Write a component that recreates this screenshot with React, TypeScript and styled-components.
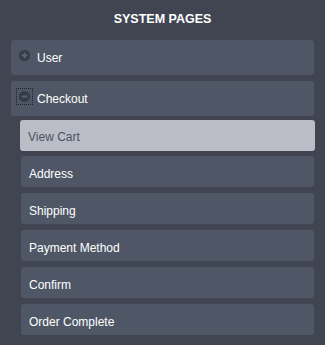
import React from "react";
import styled, { createGlobalStyle } from "styled-components";

const Global = createGlobalStyle`
  html, body {
    margin: 0;
    padding: 0;
    background: #404551;
  }
  body {
    font-family: "Liberation Sans", Arial, sans-serif;
  }
`;

const Panel = styled.nav`
  width: 325px;
  height: 345px;
  box-sizing: border-box;
  padding: 0 11px;
  background: #404551;
`;

const Title = styled.h2`
  margin: 0 0 13px;
  padding-top: 12px;
  font-size: 12.5px;
  line-height: 15px;
  font-weight: bold;
  text-align: center;
  color: #ffffff;
  text-transform: uppercase;
`;

const GroupList = styled.ul`
  list-style: none;
  margin: 0;
  padding: 0;
  display: flex;
  flex-direction: column;
  gap: 6px;
`;

const Group = styled.li`
  display: flex;
  flex-direction: column;
`;

const GroupRow = styled.div`
  height: 35px;
  box-sizing: border-box;
  padding: 11px 8px 0;
  display: flex;
  align-items: flex-start;
  gap: 7px;
  background: #4f5766;
  border-radius: 3px;
  color: #ffffff;
  font-size: 12px;
  line-height: 14px;
`;

const Toggle = styled.span<{ $focused?: boolean }>`
  display: block;
  width: 11px;
  height: 11px;
  margin-top: -1px;
  flex: none;
  outline: ${(p) => (p.$focused ? "1px dotted #1f2228" : "none")};
  outline-offset: 2px;
  svg {
    display: block;
  }
`;

const SubList = styled.ul`
  list-style: none;
  margin: 3px 0 0 10px;
  padding: 0;
  display: flex;
  flex-direction: column;
  gap: 6px;
`;

const SubItem = styled.li<{ $active?: boolean }>`
  height: 31px;
  box-sizing: border-box;
  padding: ${(p) => (p.$active ? "10px 8px 0" : "11px 8px 0")};
  margin: ${(p) => (p.$active ? "1px -1px -1px" : "0")};
  background: ${(p) => (p.$active ? "#babdc5" : "#4f5766")};
  color: ${(p) => (p.$active ? "#4b5263" : "#ffffff")};
  border-radius: 3px;
  font-size: 12px;
  line-height: 14px;
`;

const ToggleIcon = ({ open }: { open: boolean }) => (
  <svg width="11" height="11" viewBox="0 0 11 11">
    <circle cx="5.5" cy="5.5" r="5.5" fill="#363a42" />
    <rect x="2.5" y="4.5" width="6" height="2" fill="#5a6170" />
    {!open && <rect x="4.5" y="2.5" width="2" height="6" fill="#5a6170" />}
  </svg>
);

const steps = [
  "View Cart",
  "Address",
  "Shipping",
  "Payment Method",
  "Confirm",
  "Order Complete",
];

export default function App() {
  return (
    <>
      <Global />
      <Panel>
        <Title>System Pages</Title>
        <GroupList>
          <Group>
            <GroupRow>
              <Toggle>
                <ToggleIcon open={false} />
              </Toggle>
              User
            </GroupRow>
          </Group>
          <Group>
            <GroupRow>
              <Toggle $focused>
                <ToggleIcon open />
              </Toggle>
              Checkout
            </GroupRow>
            <SubList>
              {steps.map((s, i) => (
                <SubItem key={s} $active={i === 0}>
                  {s}
                </SubItem>
              ))}
            </SubList>
          </Group>
        </GroupList>
      </Panel>
    </>
  );
}
